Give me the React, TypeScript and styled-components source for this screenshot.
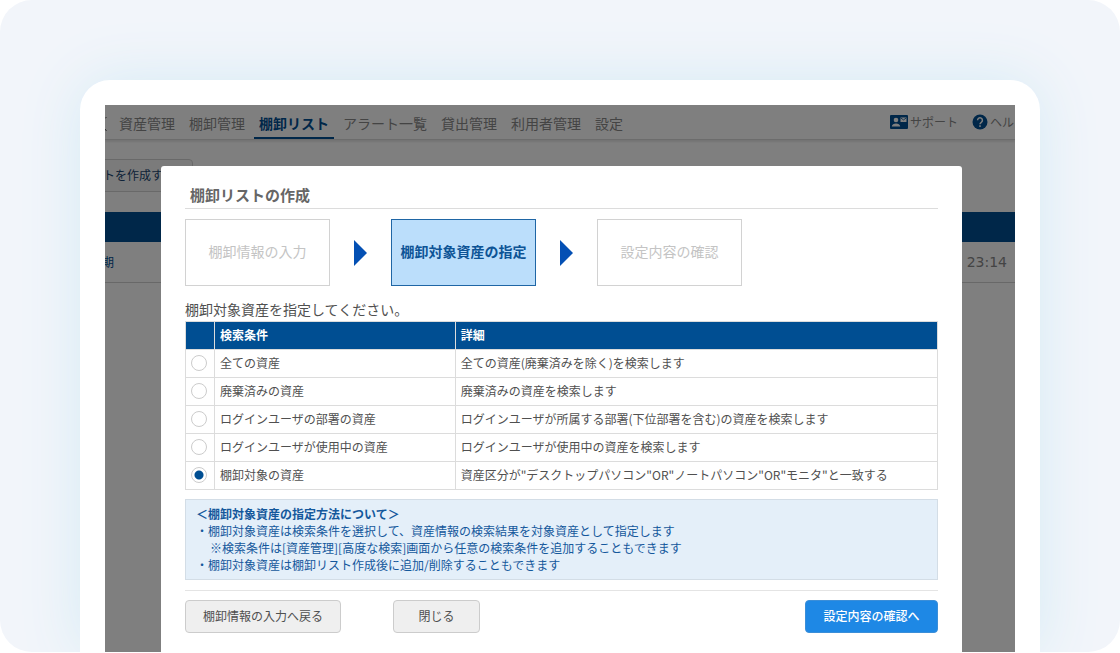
import React, { useState } from "react";
import styled, { createGlobalStyle, css } from "styled-components";

const navy = "#004e92";

const GlobalStyle = createGlobalStyle`
  * { box-sizing: border-box; }
  body {
    margin: 0;
    background: #fff;
    color: #505050;
    font-family: "Noto Sans CJK JP", sans-serif;
    font-size: 12px;
    line-height: 17px;
  }
  button, input { font: inherit; }
`;

const Stage = styled.div`
  padding: 80px 80px 0;
  background: #f2f5fa;
  border-radius: 32px;
  overflow: hidden;
`;

const Device = styled.div`
  padding: 25px 25px 0;
  background: #fff;
  border-radius: 30px 30px 0 0;
  box-shadow: 0 0 60px #d5ebf5;
`;

const Screen = styled.div`
  display: grid;
  grid-template-columns: minmax(0, 1fr);
  overflow: hidden;
`;

const Layer = styled.div`
  grid-area: 1 / 1;
  min-width: 0;
`;

const Backdrop = styled(Layer)`
  position: relative;
  display: flex;
  padding: 61px 53px 0 56px;
  background: rgba(0, 0, 0, 0.5);
`;

const TopBarWrap = styled.div`
  border-bottom: 1px solid #d8d8d8;
  box-shadow: 0 2px 2px #e8e8e8;
`;

const TopBar = styled.header`
  display: flex;
  height: 34px;
  overflow: hidden;
`;

const Nav = styled.nav`
  display: flex;
  gap: 14px;
  flex: none;
  margin-left: 12px;
`;

const NavLink = styled.a<{ $active?: boolean }>`
  height: 34px;
  color: #888;
  font-size: 14px;
  line-height: 36px;
  text-decoration: none;
  white-space: nowrap;
  ${(p) =>
    p.$active &&
    css`
      margin: 0 -5px;
      padding: 0 5px;
      border-bottom: 2px solid ${navy};
      color: ${navy};
      font-weight: 700;
    `}
`;

const Tools = styled.div`
  display: flex;
  gap: 14px;
  flex: none;
  margin: 0 -11px 0 auto;
`;

const ToolLink = styled.a`
  display: flex;
  align-items: center;
  gap: 2px;
  color: #888;
  line-height: 34px;
  text-decoration: none;
  white-space: nowrap;
`;

const BackButton = styled.button`
  display: block;
  height: 33px;
  width: 98px;
  margin: 19px 0 20px -10px;
  padding: 0 0 2px 7px;
  border: 1px solid #d2d2d2;
  border-radius: 4px;
  background: #f6f6f6;
  color: #1c4670;
  text-align: left;
  white-space: nowrap;
`;

const HeadStrip = styled.div`
  height: 30px;
  background: ${navy};
`;

const BackRow = styled.div`
  display: flex;
  justify-content: space-between;
  height: 41px;
  padding-right: 8px;
  border-bottom: 1px solid #d0d0d0;
  line-height: 40px;
`;

const RowLink = styled.a`
  margin-left: -3px;
  color: ${navy};
  text-decoration: none;
`;

const RowTime = styled.time`
  color: #888;
  font-family: "DejaVu Sans", sans-serif;
  font-size: 14px;
`;

const Modal = styled.section`
  flex: 1;
  min-width: 0;
  padding: 18px 24px 19px;
  background: #fff;
  border-radius: 3px 3px 0 0;
`;

const Title = styled.h1`
  margin: 0;
  padding: 0 5px 2px;
  border-bottom: 1px solid #dcdcdc;
  color: #666;
  font-size: 15px;
  line-height: 22px;
`;

const Steps = styled.ol`
  display: flex;
  align-items: center;
  margin: 10px 0 14px;
  padding: 0;
  list-style: none;
`;

const Step = styled.li<{ $active?: boolean }>`
  width: 145px;
  height: 67px;
  border: 1px solid ${(p) => (p.$active ? "#1f66a5" : "#d2d2d2")};
  background: ${(p) => (p.$active ? "#bbdefb" : "#fff")};
  color: ${(p) => (p.$active ? "#0d5496" : "#c4c4c4")};
  font-size: 14px;
  font-weight: ${(p) => (p.$active ? 700 : 400)};
  line-height: 62px;
  text-align: center;
  white-space: nowrap;
`;

const StepGap = styled.li`
  display: flex;
  padding: 0 24px;
`;

const Lead = styled.p`
  margin: 0 0 3px;
  font-size: 14px;
  line-height: 18px;
`;

const Table = styled.table`
  width: 100%;
  border-collapse: collapse;
  table-layout: fixed;
  th, td {
    height: 28px;
    padding: 0 5px 2px;
    border: 1px solid #dcdcdc;
    text-align: left;
    white-space: nowrap;
  }
  th {
    background: ${navy};
    color: #fff;
  }
`;

const RadioCell = styled.td`
  && { padding: 0 0 2px 5px; }
`;

const Radio = styled.input`
  display: block;
  appearance: none;
  width: 16px;
  height: 16px;
  margin: 0;
  border: 1px solid #ccc;
  border-radius: 50%;
  background: #fff;
  &:checked {
    background: radial-gradient(circle, ${navy} 4px, #fff 5px);
  }
`;

const Note = styled.div`
  margin-top: 9px;
  padding: 5px 10px 6px;
  border: 1px solid #d3dde6;
  background: #e4eff9;
  color: #14589c;
`;

const NoteLine = styled.p<{ $indent?: boolean; $strong?: boolean }>`
  margin: 0;
  padding-left: ${(p) => (p.$indent ? 14 : 0)}px;
  font-weight: ${(p) => (p.$strong ? 700 : 400)};
`;

const Footer = styled.footer`
  display: flex;
  margin-top: 10px;
  padding-top: 9px;
  border-top: 1px solid #e4e4e4;
`;

const Button = styled.button<{ $primary?: boolean; $width: number }>`
  width: ${(p) => p.$width}px;
  height: 33px;
  padding: 0 0 2px;
  border: 1px solid #ccc;
  border-radius: 4px;
  background: #efefef;
  color: #505050;
  white-space: nowrap;
  & + & { margin-left: 52px; }
  ${(p) =>
    p.$primary &&
    css`
      && { margin-left: auto; }
      border-color: #3b8ed8;
      background: #1e88e5;
      color: #fff;
      font-weight: 500;
    `}
`;

const LogoEdge = styled.svg`
  flex: none;
  margin-top: 11px;
`;

const Arrow = () => (
  <StepGap aria-hidden="true">
    <svg width="13" height="26" viewBox="0 0 13 26">
      <path d="M0 0 13 13 0 26Z" fill="#0450b4" />
    </svg>
  </StepGap>
);

const ContactIcon = () => (
  <svg width="18" height="14" viewBox="0 0 18 14" aria-hidden="true">
    <rect width="18" height="14" rx="1" fill={navy} />
    <circle cx="6" cy="5" r="2.3" fill="#fff" />
    <path d="M1.8 11.5C1.8 9.3 4 8.4 6 8.4s4.2.9 4.2 3.1z" fill="#fff" />
    <rect x="10.5" y="2.5" width="6" height="4.5" fill="#fff" />
    <path d="m10.8 3 2.7 1.9L16.2 3" fill="none" stroke={navy} strokeWidth="0.8" />
  </svg>
);

const HelpIcon = () => (
  <svg width="16" height="16" viewBox="0 0 16 16" aria-hidden="true">
    <circle cx="8" cy="8" r="7.5" fill={navy} />
    <path d="M5.6 6.3a2.4 2.4 0 1 1 3.7 2C8.4 8.9 8 9.2 8 10.2" fill="none" stroke="#fff" strokeWidth="1.5" />
    <rect x="7.2" y="11.3" width="1.6" height="1.6" fill="#fff" />
  </svg>
);

const tabs = ["資産管理", "棚卸管理", "棚卸リスト", "アラート一覧", "貸出管理", "利用者管理", "設定"];

const conditions = [
  ["全ての資産", "全ての資産(廃棄済みを除く)を検索します"],
  ["廃棄済みの資産", "廃棄済みの資産を検索します"],
  ["ログインユーザの部署の資産", "ログインユーザが所属する部署(下位部署を含む)の資産を検索します"],
  ["ログインユーザが使用中の資産", "ログインユーザが使用中の資産を検索します"],
  ["棚卸対象の資産", '資産区分が"デスクトップパソコン"OR"ノートパソコン"OR"モニタ"と一致する'],
];

export default function App() {
  const [selected, setSelected] = useState(4);
  return (
    <>
      <GlobalStyle />
      <Stage>
        <Device>
          <Screen>
            <Layer>
              <TopBarWrap>
                <TopBar>
                  <LogoEdge width="2" height="18" viewBox="0 0 2 18" aria-hidden="true">
                    <path d="M0 2.5 1.5 1M0 13l1.5 2" stroke="#555" />
                  </LogoEdge>
                  <Nav>
                    {tabs.map((t) => (
                      <NavLink key={t} href="#" $active={t === "棚卸リスト"}>{t}</NavLink>
                    ))}
                  </Nav>
                  <Tools>
                    <ToolLink href="#"><ContactIcon />サポート</ToolLink>
                    <ToolLink href="#"><HelpIcon />ヘルプ</ToolLink>
                  </Tools>
                </TopBar>
              </TopBarWrap>
              <BackButton type="button">トを作成する</BackButton>
              <HeadStrip />
              <BackRow>
                <RowLink href="#">期</RowLink>
                <RowTime>0 23:14</RowTime>
              </BackRow>
            </Layer>
            <Backdrop>
              <Modal role="dialog" aria-labelledby="dialog-title">
                <Title id="dialog-title">棚卸リストの作成</Title>
                <Steps>
                  <Step>棚卸情報の入力</Step>
                  <Arrow />
                  <Step $active aria-current="step">棚卸対象資産の指定</Step>
                  <Arrow />
                  <Step>設定内容の確認</Step>
                </Steps>
                <Lead>棚卸対象資産を指定してください。</Lead>
                <Table>
                  <colgroup>
                    <col width="29" />
                    <col width="32%" />
                    <col />
                  </colgroup>
                  <thead>
                    <tr>
                      <th aria-label="選択" />
                      <th>検索条件</th>
                      <th>詳細</th>
                    </tr>
                  </thead>
                  <tbody>
                    {conditions.map(([name, detail], i) => (
                      <tr key={name}>
                        <RadioCell>
                          <Radio
                            type="radio"
                            name="condition"
                            id={`condition-${i}`}
                            checked={selected === i}
                            onChange={() => setSelected(i)}
                          />
                        </RadioCell>
                        <td><label htmlFor={`condition-${i}`}>{name}</label></td>
                        <td>{detail}</td>
                      </tr>
                    ))}
                  </tbody>
                </Table>
                <Note>
                  <NoteLine $strong>＜棚卸対象資産の指定方法について＞</NoteLine>
                  <NoteLine>・棚卸対象資産は検索条件を選択して、資産情報の検索結果を対象資産として指定します</NoteLine>
                  <NoteLine $indent>※検索条件は[資産管理][高度な検索]画面から任意の検索条件を追加することもできます</NoteLine>
                  <NoteLine>・棚卸対象資産は棚卸リスト作成後に追加/削除することもできます</NoteLine>
                </Note>
                <Footer>
                  <Button type="button" $width={156}>棚卸情報の入力へ戻る</Button>
                  <Button type="button" $width={87}>閉じる</Button>
                  <Button type="button" $primary $width={133}>設定内容の確認へ</Button>
                </Footer>
              </Modal>
            </Backdrop>
          </Screen>
        </Device>
      </Stage>
    </>
  );
}
